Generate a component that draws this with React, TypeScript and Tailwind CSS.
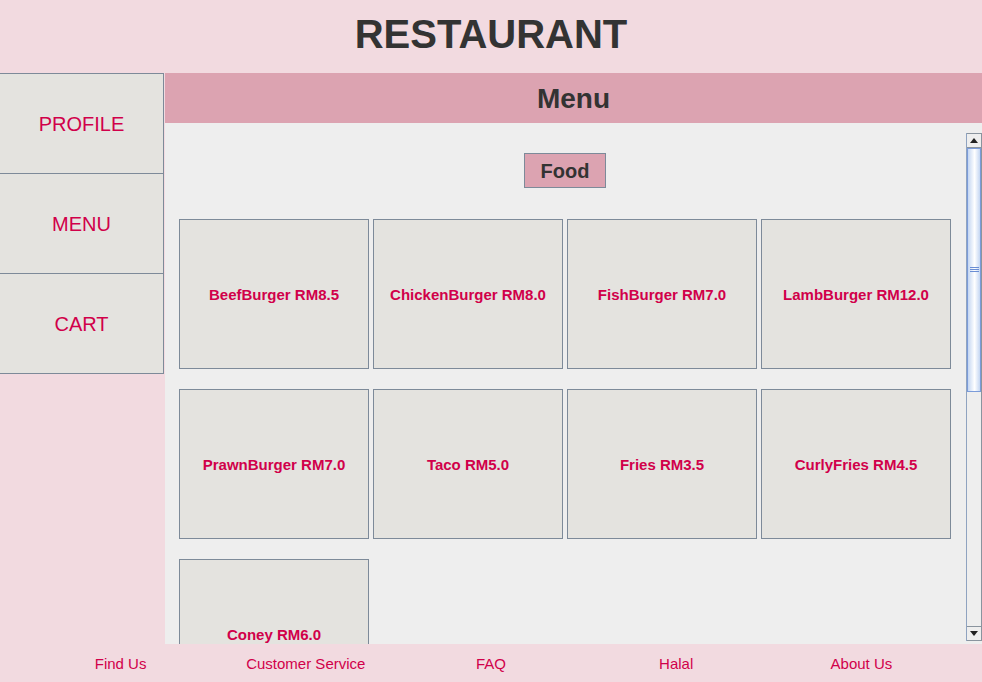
import React from "react";

const items = [
  "BeefBurger RM8.5",
  "ChickenBurger RM8.0",
  "FishBurger RM7.0",
  "LambBurger RM12.0",
  "PrawnBurger RM7.0",
  "Taco RM5.0",
  "Fries RM3.5",
  "CurlyFries RM4.5",
  "Coney RM6.0",
];

const font = { fontFamily: '"Liberation Sans", Arial, sans-serif' };

function Scrollbar() {
  return (
    <div className="mt-[10px] mb-[3px] w-[16px] shrink-0 flex flex-col border-l border-[#8fa3c0] border-r border-r-[#8a949e] bg-[#eeeeee]">
      <div className="h-[15px] shrink-0 border-t border-b border-[#8a949e] bg-[#eeeeee] flex items-center justify-center">
        <svg width="8" height="5" viewBox="0 0 8 5">
          <polygon points="4,0 8,5 0,5" fill="#222" />
        </svg>
      </div>
      <div className="h-[244px] shrink-0 border border-[#7b9bd9] bg-[linear-gradient(to_right,#c4d6f2,#ffffff_55%,#c4d6f2)] flex items-center justify-center">
        <div className="flex flex-col gap-[1px] mt-[-2px]">
          <div className="w-[9px] h-[1px] bg-[#6b8ed4]" />
          <div className="w-[9px] h-[1px] bg-[#6b8ed4]" />
          <div className="w-[9px] h-[1px] bg-[#6b8ed4]" />
        </div>
      </div>
      <div className="flex-1" />
      <div className="h-[15px] shrink-0 border-t border-b border-[#8a949e] bg-[#eeeeee] flex items-center justify-center">
        <svg width="8" height="5" viewBox="0 0 8 5">
          <polygon points="0,0 8,0 4,5" fill="#222" />
        </svg>
      </div>
    </div>
  );
}

export default function App() {
  return (
    <div className="w-[982px] h-[682px] flex flex-col bg-[#f2dae0] overflow-hidden" style={font}>
      <div className="h-[73px] shrink-0 flex items-center justify-center">
        <h1 className="text-[40px] font-bold text-[#333333] leading-none mt-[-6px]">RESTAURANT</h1>
      </div>
      <div className="flex flex-1 min-h-0">
        <div className="w-[165px] shrink-0 flex flex-col">
          {["PROFILE", "MENU", "CART"].map((l, i) => (
            <div
              key={l}
              className={`w-[164px] h-[100px] shrink-0 bg-[#e4e3df] border-r border-b border-[#7d8a99] ${i === 0 ? "border-t h-[101px]" : ""} flex items-center justify-center text-[20px] text-[#d1004a]`}
            >
              {l}
            </div>
          ))}
        </div>
        <div className="flex-1 flex flex-col min-w-0">
          <div className="h-[50px] shrink-0 bg-[#dca3b1] flex items-center justify-center">
            <span className="text-[28px] font-bold text-[#333333] pt-[2px]">Menu</span>
          </div>
          <div className="flex-1 min-h-0 bg-[#eeeeee] flex overflow-hidden">
            <div className="flex-1 flex flex-col items-center pt-[30px] pr-[1px] overflow-hidden">
              <div className="w-[82px] h-[35px] shrink-0 bg-[#dca3b1] border border-[#7d8a99] flex items-center justify-center text-[20px] font-bold text-[#333333] pt-[1px]">
                Food
              </div>
              <div className="mt-[31px] grid grid-cols-[repeat(4,190px)] gap-x-[4px] gap-y-[20px]">
                {items.map((it) => (
                  <div
                    key={it}
                    className="h-[150px] bg-[#e4e3df] border border-[#7d8a99] flex items-center justify-center text-[15px] font-bold text-[#d1004a] pt-[2px]"
                  >
                    {it}
                  </div>
                ))}
              </div>
            </div>
            <Scrollbar />
          </div>
        </div>
      </div>
      <div className="h-[38px] shrink-0 grid grid-cols-5 px-[28px] items-center text-[15px] text-[#d1004a] pt-[2px]">
        {["Find Us", "Customer Service", "FAQ", "Halal", "About Us"].map((f) => (
          <div key={f} className="text-center">
            {f}
          </div>
        ))}
      </div>
    </div>
  );
}
